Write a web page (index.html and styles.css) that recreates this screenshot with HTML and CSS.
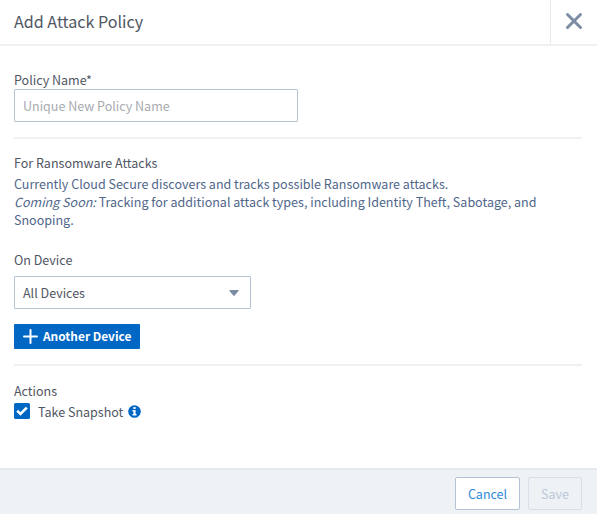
FILE: index.html
```html
<!DOCTYPE html>
<html lang="en">
<head>
<meta charset="utf-8">
<title>Add Attack Policy</title>
<link rel="stylesheet" href="styles.css">
</head>
<body>
<div class="dialog">
  <header class="header">
    <h1 class="title">Add Attack Policy</h1>
    <button class="close" aria-label="Close">
      <svg width="18" height="18" viewBox="0 0 18 18"><path d="M2.500 2.500l13 13M15.500 2.500l-13 13"/></svg>
    </button>
  </header>
  <main class="body">
    <section class="section name">
      <label class="label" for="name">Policy Name*</label>
      <input class="input" id="name" type="text" placeholder="Unique New Policy Name">
    </section>
    <section class="section attacks">
      <h2 class="label">For Ransomware Attacks</h2>
      <p class="note">Currently Cloud Secure discovers and tracks possible Ransomware attacks.<br><em>Coming Soon:</em> Tracking for additional attack types, including Identity Theft, Sabotage, and<br>Snooping.</p>
      <h2 class="label device-label">On Device</h2>
      <div class="select"><span>All Devices</span><svg width="10" height="6" viewBox="0 0 10 6"><path d="M1 0h8q1 0 .5 1L5.700 5.500q-.7.8-1.400 0L.5 1Q0 0 1 0z"/></svg></div>
      <button class="add"><svg width="15" height="15" viewBox="0 0 15 15"><path d="M7.500 1v13M1 7.500h13"/></svg><span>Another Device</span></button>
    </section>
    <section class="actions">
      <h2 class="label">Actions</h2>
      <div class="check">
        <svg class="box" width="16" height="16" viewBox="0 0 16 16"><rect width="16" height="16" rx="1.500"/><path d="M3.200 7.800l3.300 3.200 6.300-6.300"/></svg>
        <span class="check-text">Take Snapshot</span>
        <svg class="info" width="13" height="13" viewBox="0 0 13 13"><circle cx="6.500" cy="6.500" r="6.300"/><path d="M5.400 2h2.200v2H5.400zM4.500 5h3.100v4h.9v1.400h-4V9h.9V6.400h-.9z"/></svg>
      </div>
    </section>
  </main>
  <footer class="footer">
    <button class="btn cancel">Cancel</button>
    <button class="btn save" disabled>Save</button>
  </footer>
</div>
</body>
</html>
```
FILE: styles.css
```css
* { box-sizing: border-box; }
body {
  margin: 0;
  color: #515663;
  background: #fff;
  font: 12.52px/18px "Noto Sans CJK SC", "Noto Sans", sans-serif;
}
h1, h2, p { margin: 0; font: inherit; }
button, input { font: inherit; margin: 0; }
.dialog { display: flex; flex-direction: column; height: 514px; }
.header { display: flex; height: 46px; border-bottom: 2px solid #f0f0f1; }
.title { flex: 1; padding-left: 14px; font-size: 16.1px; line-height: 42px; }
.close {
  display: flex; align-items: center; justify-content: center;
  width: 47px; padding: 0 0 2px; border: 0; border-left: 1px solid #e7e9ed; background: none;
}
.close path { fill: none; stroke: #7b8ca3; stroke-width: 3; stroke-linecap: round; }
.body { flex: 1; padding: 25px 15px 0 14px; }
.section { border-bottom: 2px solid #f0f0f1; }
.label { display: block; }
.name { height: 68px; }
.input {
  display: block; width: 284px; height: 33px; padding: 0 8px 1px;
  border: 1px solid #b3c3d3; border-radius: 1px; background: #fff;
}
.input::placeholder { color: #a8abb0; opacity: 1; }
.attacks { height: 227px; padding-top: 15px; }
.note { margin-top: 3px; color: #50668a; white-space: nowrap; }
.device-label { margin-top: 22px; }
.select {
  display: flex; align-items: center; justify-content: space-between;
  width: 237px; height: 33px; margin-top: 7px; padding: 0 11px 0 8px;
  border: 1px solid #b3c3d3; border-radius: 1px;
}
.select path { fill: #7b8ca3; }
.add {
  display: flex; align-items: center; gap: 5px;
  width: 126px; height: 25px; margin-top: 15px; padding: 0 9px 1px;
  border: 0; border-radius: 1px; background: #0067c5; color: #fff;
  font-weight: 700; font-size: 11.9px; white-space: nowrap;
}
.add svg { flex: none; }
.add path { stroke: #fff; stroke-width: 2; stroke-linecap: round; }
.actions { padding-top: 16px; }
.check { display: flex; align-items: center; height: 22px; }
.check-text { padding-top: 2px; }
.box { margin-right: 8px; }
.box rect { fill: #0067c5; }
.box path { fill: none; stroke: #fff; stroke-width: 2.6; }
.info { margin-left: 5px; }
.info circle { fill: #0067c5; }
.info path { fill: #fff; }
.footer {
  display: flex; justify-content: flex-end; gap: 8px;
  height: 46px; padding: 7px 15px 0 0; border-top: 2px solid #e5e9ed; background: #eef2f5;
}
.btn { height: 33px; padding: 0; border: 1px solid #b3c3d3; border-radius: 2px; }
.cancel { width: 65px; background: #fff; color: #2f8ad9; }
.save { width: 54px; background: #eef2f5; border-color: #d7dfe8; color: #bdc8da; }
```
